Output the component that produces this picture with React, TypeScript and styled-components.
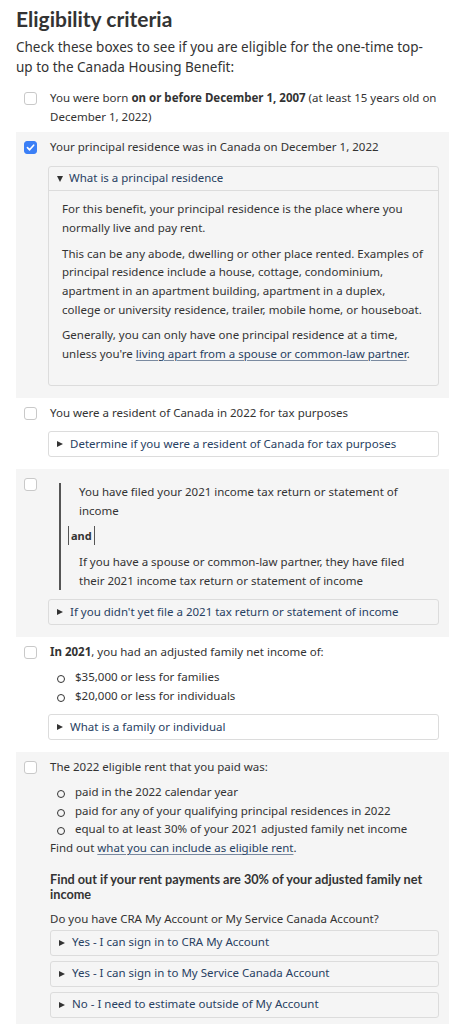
import React, { FunctionComponent, ReactNode } from 'react';
import styled, { createGlobalStyle } from 'styled-components';

const GlobalStyle = createGlobalStyle`
  html, body {
    margin: 0;
    padding: 0;
    background: #fff;
  }
  body {
    font-family: 'Noto Sans', 'Open Sans', sans-serif;
    color: #333;
    overflow-x: hidden;
  }
  * {
    box-sizing: border-box;
  }
`;

type ExpanderProps = {
  title: string;
  open?: boolean;
  flush?: boolean;
  children?: ReactNode;
};

const Expander: FunctionComponent<ExpanderProps> = ({ title, open, flush, children }) => (
  <Details open={open} $flush={flush}>
    <Summary $open={open}>
      <Marker $open={open} />
      {title}
    </Summary>
    {children && <DetailsBody>{children}</DetailsBody>}
  </Details>
);

type CriterionProps = {
  shaded?: boolean;
  checked?: boolean;
  children: ReactNode;
};

const Criterion: FunctionComponent<CriterionProps> = ({ shaded, checked, children }) => (
  <Row $shaded={shaded}>
    <Box $checked={checked}>
      {checked && (
        <svg width="9" height="9" viewBox="0 0 10 10" fill="none">
          <path d="M1.6 5.2 L4 7.6 L8.5 2.4" stroke="#fff" strokeWidth="1.8" strokeLinecap="round" strokeLinejoin="round" />
        </svg>
      )}
    </Box>
    <RowBody>{children}</RowBody>
  </Row>
);

const App: FunctionComponent<{}> = () => {
  return (
    <Page>
      <GlobalStyle />
      <Title>Eligibility criteria</Title>
      <Intro>Check these boxes to see if you are eligible for the one-time top-up to the Canada Housing Benefit:</Intro>

      <Criterion>
        <Text>
          You were born <strong>on or before December 1, 2007</strong> (at least 15 years old on December 1, 2022)
        </Text>
      </Criterion>

      <Criterion shaded checked>
        <Text>Your principal residence was in Canada on December 1, 2022</Text>
        <Expander title="What is a principal residence" open>
          <Para>For this benefit, your principal residence is the place where you normally live and pay rent.</Para>
          <Para>
            This can be any abode, dwelling or other place rented. Examples of principal residence include a house,
            cottage, condominium, apartment in an apartment building, apartment in a duplex, college or university
            residence, trailer, mobile home, or houseboat.
          </Para>
          <Para>
            Generally, you can only have one principal residence at a time, unless you're{' '}
            <Link href="#">living apart from a spouse or common-law partner</Link>.
          </Para>
        </Expander>
      </Criterion>

      <Criterion>
        <Text>You were a resident of Canada in 2022 for tax purposes</Text>
        <Expander title="Determine if you were a resident of Canada for tax purposes" />
      </Criterion>

      <Criterion shaded>
        <Quote>
          <QuoteText>You have filed your 2021 income tax return or statement of income</QuoteText>
          <Joiner>and</Joiner>
          <QuoteText>If you have a spouse or common-law partner, they have filed their 2021 income tax return or statement of income</QuoteText>
        </Quote>
        <Expander title="If you didn't yet file a 2021 tax return or statement of income" />
      </Criterion>

      <Criterion>
        <Text>
          <strong>In 2021</strong>, you had an adjusted family net income of:
        </Text>
        <Bullets>
          <li>$35,000 or less for families</li>
          <li>$20,000 or less for individuals</li>
        </Bullets>
        <Expander title="What is a family or individual" />
      </Criterion>

      <Criterion shaded>
        <Text>The 2022 eligible rent that you paid was:</Text>
        <Bullets>
          <li>paid in the 2022 calendar year</li>
          <li>paid for any of your qualifying principal residences in 2022</li>
          <li>equal to at least 30% of your 2021 adjusted family net income</li>
        </Bullets>
        <Text>
          Find out <Link href="#">what you can include as eligible rent</Link>.
        </Text>
        <SubHeading>Find out if your rent payments are 30% of your adjusted family net income</SubHeading>
        <Question>Do you have CRA My Account or My Service Canada Account?</Question>
        <Stack>
          <Expander flush title="Yes - I can sign in to CRA My Account" />
          <Expander flush title="Yes - I can sign in to My Service Canada Account" />
          <Expander flush title="No - I need to estimate outside of My Account" />
        </Stack>
      </Criterion>
    </Page>
  );
};

const Page = styled.main`
  width: 449px;
  padding: 0 0 40px 16px;
  font-size: 11.5px;
  line-height: 18.7px;
`;

const Title = styled.h2`
  font-family: Lato, 'Noto Sans', sans-serif;
  font-weight: 700;
  font-size: 21px;
  line-height: 30px;
  color: #333;
  margin: 0;
  padding-top: 4px;
`;

const Intro = styled.p`
  font-size: 13.5px;
  line-height: 20px;
  margin: 3px 12px 0 0;
`;

const Row = styled.div<{ $shaded?: boolean }>`
  display: flex;
  align-items: flex-start;
  padding: 6px 10px 6px 8px;
  background: ${(p) => (p.$shaded ? '#f5f5f5' : 'transparent')};
  &:first-of-type {
    margin-top: 6px;
  }
`;

const Box = styled.span<{ $checked?: boolean }>`
  flex: 0 0 13px;
  width: 13px;
  height: 13px;
  margin: 3px 13px 0 0;
  border-radius: 3px;
  display: flex;
  align-items: center;
  justify-content: center;
  border: 1px solid ${(p) => (p.$checked ? '#3b7ff6' : '#c9c9c9')};
  background: ${(p) => (p.$checked ? '#3b7ff6' : '#fff')};
`;

const RowBody = styled.div`
  flex: 1;
  min-width: 0;
`;

const Text = styled.p`
  margin: 0;
  strong {
    font-weight: 700;
  }
`;

const Para = styled.p`
  margin: 0 0 7px;
`;

const Link = styled.a`
  color: #284162;
  text-decoration: underline;
  text-decoration-color: #7a8aa0;
  text-underline-offset: 2px;
`;

const Details = styled.details<{ $flush?: boolean }>`
  margin: ${(p) => (p.$flush ? '0' : '9px 0 6px -2px')};
  border: 1px solid #dcdcdc;
  border-radius: 3px;
`;

const Summary = styled.summary<{ $open?: boolean }>`
  display: flex;
  align-items: center;
  height: 24px;
  padding: 0 8px;
  color: #284162;
  list-style: none;
  cursor: pointer;
  border-bottom: ${(p) => (p.$open ? '1px solid #dcdcdc' : 'none')};
  &::-webkit-details-marker {
    display: none;
  }
`;

const Marker = styled.span<{ $open?: boolean }>`
  width: 0;
  height: 0;
  margin-right: ${(p) => (p.$open ? '6px' : '7px')};
  ${(p) =>
    p.$open
      ? `border-left: 3.5px solid transparent; border-right: 3.5px solid transparent; border-top: 6px solid #333;`
      : `border-top: 3.5px solid transparent; border-bottom: 3.5px solid transparent; border-left: 6px solid #333;`}
`;

const DetailsBody = styled.div`
  padding: 9px 13px 14px;
`;

const Quote = styled.div`
  margin: 8px 0 0 9px;
  padding: 0 22px 0 7px;
  border-left: 2px solid #555;
`;

const QuoteText = styled.p`
  margin: 0;
  padding-left: 11px;
`;

const Joiner = styled.strong`
  display: inline-block;
  margin: 5px 0 8px;
  padding: 0 2px;
  height: 19px;
  line-height: 19px;
  font-size: 11px;
  font-weight: 700;
  border-left: 1.5px solid #555;
  border-right: 1.5px solid #555;
`;

const Bullets = styled.ul`
  list-style: none;
  margin: 6px 0 0;
  padding: 0 0 0 7px;
  li {
    display: flex;
    align-items: flex-start;
  }
  li::before {
    content: '';
    flex: 0 0 6px;
    width: 6px;
    height: 6px;
    margin: 7px 10px 0 0;
    border: 1.3px solid #333;
    border-radius: 50%;
  }
`;

const SubHeading = styled.h3`
  font-family: Lato, 'Noto Sans', sans-serif;
  font-weight: 700;
  font-size: 12.7px;
  line-height: 15px;
  margin: 14px 0 0;
  color: #333;
`;

const Question = styled.p`
  margin: 8px 0 0;
`;

const Stack = styled.div`
  display: flex;
  flex-direction: column;
  gap: 5px;
  margin-top: 1px;
  padding-bottom: 4px;
`;

export default App;
